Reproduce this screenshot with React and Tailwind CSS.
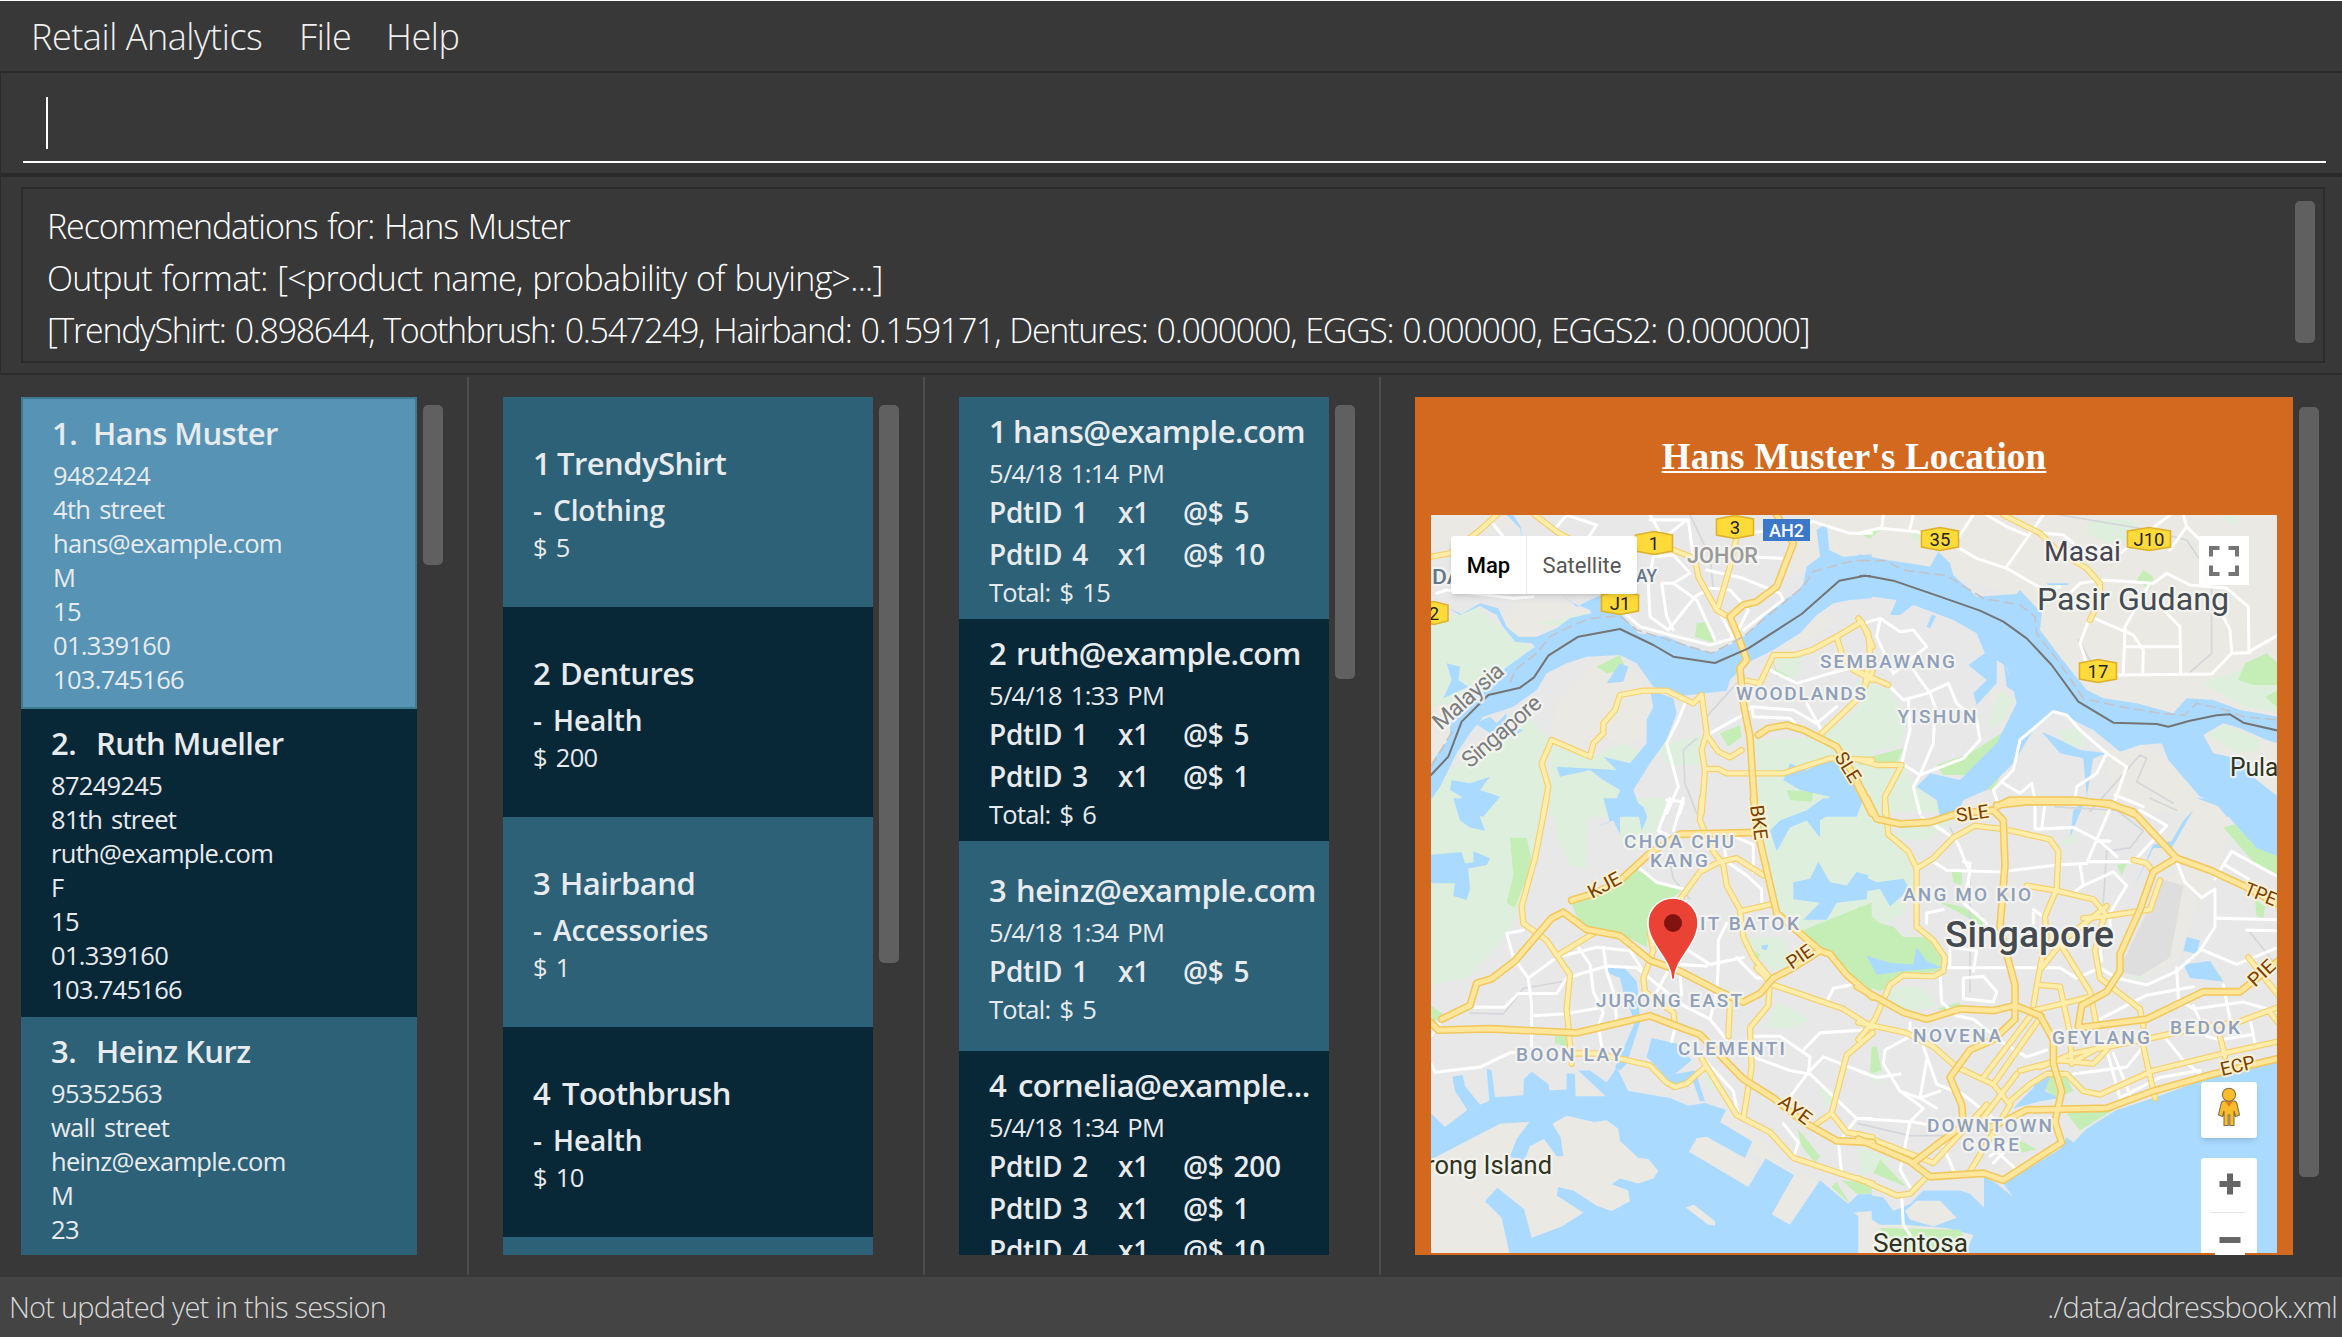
import React from "react";

const people = [
  { n: "1.", nameClass: "-ml-px w-[41px]", name: "Hans Muster", selected: true, lines: ["9482424", "4th street", "hans@example.com", "M", "15", "01.339160", "103.745166"] },
  { n: "2.", nameClass: "w-[45px]", name: "Ruth Mueller", bg: "bg-[#082838]", lines: ["87249245", "81th street", "ruth@example.com", "F", "15", "01.339160", "103.745166"] },
  { n: "3.", nameClass: "w-[45px]", name: "Heinz Kurz", bg: "min-h-[238px] bg-[#2d6178]", lines: ["95352563", "wall street", "heinz@example.com", "M", "23"] },
];

const products = [
  { n: "1", numClass: "w-[24px]", name: "TrendyShirt", category: "Clothing", price: "5" },
  { n: "2", numClass: "w-[27px]", name: "Dentures", category: "Health", price: "200" },
  { n: "3", numClass: "w-[27px]", name: "Hairband", category: "Accessories", price: "1" },
  { n: "4", numClass: "w-[29px]", name: "Toothbrush", category: "Health", price: "10" },
];

const orders = [
  { n: "1", numClass: "w-[24px]", email: "hans@example.com", time: "5/4/18 1:14 PM", items: [["1", "1", "5"], ["4", "1", "10"]], total: "15" },
  { n: "2", numClass: "w-[27px]", email: "ruth@example.com", time: "5/4/18 1:33 PM", items: [["1", "1", "5"], ["3", "1", "1"]], total: "6" },
  { n: "3", numClass: "w-[27px]", email: "heinz@example.com", time: "5/4/18 1:34 PM", items: [["1", "1", "5"]], total: "5" },
  { n: "4", numClass: "w-[29px]", email: "cornelia@example...", time: "5/4/18 1:34 PM", items: [["2", "1", "200"], ["3", "1", "1"], ["4", "1", "10"]] },
];

const TITLE = "text-[31px] font-semibold leading-[42px] tracking-[-0.55px]";
const SMALL = "text-[25.5px] leading-[34px] tracking-[-0.7px] [word-spacing:3px]";
const MID = "text-[28px] font-semibold leading-[42px]";

function ScrollThumb({ className }) {
  return <div className={"w-5 shrink-0 rounded-[5px] bg-[#606060] " + className} />;
}

function Divider() {
  return <div className="h-[898px] w-0.5 shrink-0 bg-[#4d4d4d]" />;
}

function PersonList() {
  return (
    <div className="mt-5 h-[858px] w-[396px] shrink-0 overflow-hidden text-[#e8ebee]">
      {people.map((p) => (
        <div
          key={p.n}
          className={p.selected ? "border-2 border-[#3e7b91] bg-[#5693b5] pb-[11px] pl-[30px] pt-[13px]" : "pb-[11px] pl-[30px] pt-[13px] " + p.bg}
        >
          <div className={"mb-1 flex " + TITLE}>
            <span className={"shrink-0 " + p.nameClass}>{p.n}</span>
            <span>{p.name}</span>
          </div>
          {p.lines.map((l, i) => (
            <div key={i} className={SMALL}>{l}</div>
          ))}
        </div>
      ))}
    </div>
  );
}

function ProductList() {
  return (
    <div className="mt-5 h-[858px] w-[370px] shrink-0 overflow-hidden text-[#e8ebee]">
      {products.map((p) => (
        <div key={p.n} className="flex h-[210px] flex-col bg-[#2d6178] pl-[30px] pt-[45px] even:bg-[#082838]">
          <div className={"flex " + TITLE}>
            <span className={"shrink-0 " + p.numClass}>{p.n}</span>
            <span>{p.name}</span>
          </div>
          <div className={"mt-[5px] flex tracking-[-0.1px] " + MID}>
            <span className="w-5 shrink-0">-</span>
            <span>{p.category}</span>
          </div>
          <div className={"-mt-px " + SMALL}>$ {p.price}</div>
        </div>
      ))}
      <div className="h-[18px] bg-[#2d6178]" />
    </div>
  );
}

function OrderList() {
  return (
    <div className="mt-5 h-[858px] w-[370px] shrink-0 overflow-hidden text-[#e8ebee]">
      {orders.map((o) => (
        <div key={o.n} className="flex min-h-[210px] flex-col justify-center bg-[#2d6178] pb-[8px] pl-[30px] pt-[4px] even:bg-[#082838]">
          <div className={"flex whitespace-nowrap pt-[9px] " + TITLE}>
            <span className={"shrink-0 " + o.numClass}>{o.n}</span>
            <span>{o.email}</span>
          </div>
          <div className={"mb-px mt-1 " + SMALL}>{o.time}</div>
          {o.items.map(([id, q, price]) => (
            <div key={id} className={"flex tracking-[-0.3px] [word-spacing:3px] " + MID}>
              <span className="w-[129px] shrink-0">PdtID {id}</span>
              <span className="w-[65px] shrink-0">x{q}</span>
              <span>@$ {price}</span>
            </div>
          ))}
          {o.total && <div className={"pb-0.5 " + SMALL}>Total: $ {o.total}</div>}
        </div>
      ))}
    </div>
  );
}

/* Map geometry: four tiles, each with its own local coordinate system. */
const TILE = {
  a: "translate(1390 370) scale(.33333)",
  b: "translate(1860 370) scale(.33333)",
  c: "translate(1390 800) scale(.33333 .34247)",
  d: "translate(1860 800) scale(.33333 .34247)",
};

const beige = {
  a: ["123,435 440,435 330,480 200,520 123,540", "420,690 500,700 600,720 540,750 440,800 380,800 330,760 380,700", "500,1000 620,870 690,860 780,960 780,1090 700,1130 640,1100 600,1160 480,1100", "123,980 300,930 345,895 240,980 123,1190", "1220,435 1445,435 1445,570 1250,600 1160,640 1200,560", "1100,890 1170,850 1250,770 1310,730 1330,760 1200,850 1140,930"],
  b: ["-5,435 1255,435 1255,1045 1000,1050 700,990 540,780 480,680 280,620 -5,560", "300,780 375,850 370,920 420,1080 300,1240 380,1260 470,1100 390,900", "740,1140 840,1120 920,1170 1040,1300 1090,1325 700,1325 760,1290"],
  c: ["300,40 400,20 350,110 290,110", "1190,1240 1290,1110 1215,1090 1145,1210", "900,1027 920,988 955,985 1100,1060 1075,1130", "557,805 647,865 557,865", "1010,910 1100,980 1210,1095 1120,1060 990,940"],
  d: ["880,160 1010,-5 1080,20 1110,80 1065,240 1020,290 960,190", "880,250 960,210 1010,300 960,460 860,520 900,380", "640,960 700,950 640,1000", "380,1090 480,1040 560,1040 430,1120"],
};

const lightGreen = {
  a: ["123,770 180,740 260,710 330,770 385,815 430,830 350,890 300,930 180,1000 123,1010", "300,1120 420,1040 480,1110 450,1340 123,1340 123,1290 180,1200", "480,1120 600,1165 700,1120 760,1150 690,1340 480,1340", "1090,1110 1290,1100 1440,990 1450,990 1450,1340 1095,1340 1110,1200", "440,760 560,735 600,725 520,770", "800,1130 950,1090 940,1180 840,1190", "1160,870 1240,850 1220,920 1180,930"],
  b: ["-5,930 90,960 140,1050 120,1130 -5,1150", "690,450 820,450 860,510 740,520 680,490", "150,480 210,480 200,540 150,500", "1030,940 1140,900 1255,950 1255,1030 1150,1010", "420,960 465,990 430,1050 380,1080", "590,1080 660,1070 680,1130 620,1130", "430,870 490,960 470,970", "-5,1160 120,1150 160,1240 260,1325 -5,1325", "1080,440 1130,435 1130,470"],
  c: ["123,-5 460,-5 430,200 380,330 350,400 230,520 123,540", "480,-5 600,-5 590,200 540,190 500,110", "1095,-5 1445,-5 1445,320 1230,400 1170,330 1130,150", "1060,400 1180,400 1210,480 1150,500 1090,440", "1160,590 1260,640 1200,670 1130,660", "700,-5 840,-5 810,80 740,150 690,120", "940,790 1000,840 960,850", "1280,820 1340,860 1310,900"],
  d: ["-5,-5 70,-5 90,110 150,160 160,240 130,330 60,370 -5,300", "100,110 200,120 280,60 200,55 120,80", "120,540 190,550 230,600 150,620 60,590", "600,130 650,90 640,130", "20,800 60,790 60,830", "-5,1010 100,1050 0,1100", "820,515 860,510 840,530"],
};

const park = {
  a: ["920,760 950,755 975,820 915,800", "620,890 690,855 710,900 650,910", "990,1090 1050,1065 1055,1100 1015,1130", "1190,1260 1270,1265 1265,1295 1200,1290", "1145,860 1160,900 1200,920 1160,920"],
  b: ["230,1185 330,1150 440,1080 400,1160 320,1215 250,1215", "-5,1170 130,1135 110,1180 -5,1185", "830,630 850,600 880,620 870,660", "1135,930 1155,880 1220,850 1255,880 1255,945 1180,945", "370,1260 430,1200 400,1260", "-5,485 60,478 30,507", "1215,980 1255,960 1255,1015"],
  c: ["540,290 650,265 740,205 800,235 875,265 840,290 780,330 770,430 690,390 600,380 560,340", "1445,300 1340,340 1240,380 1270,430 1340,460 1380,520 1445,570", "360,110 410,110 430,200 400,250 375,315 350,300 370,220", "123,600 165,630 123,650", "495,680 540,680 530,720 495,710", "1222,958 1290,1040 1275,1060 1235,1010", "1340,1115 1380,1180 1325,1130", "1355,1110 1445,1120 1445,1150 1400,1150", "1085,440 1110,450 1100,480"],
  d: ["-5,310 60,360 100,370 130,400 200,400 250,450 240,500 130,510 60,560 -5,530", "230,295 300,310 370,340 370,370 300,330", "275,210 305,210 305,250 280,240", "1090,80 1130,70 1200,140 1255,165 1255,220 1180,180", "1185,290 1215,310 1210,345 1190,340", "35,720 50,720 65,790 30,800", "560,800 610,790 640,850 590,870 550,840", "620,915 770,900 700,940 660,965", "470,990 530,1020 480,1030", "60,1050 140,1130 40,1090", "150,1250 310,1260 330,1280 300,1325 130,1325", "230,610 300,590 290,620", "770,190 800,185 785,220", "1050,490 1090,520 1060,520"],
};

const water = {
  a: [
    "123,1180 180,1100 180,1060 250,960 330,930 345,895 435,830 425,820 375,815 335,765 320,735 270,708 210,735 175,715 215,732 270,700 325,715 350,770 385,800 440,800 500,775 540,745 605,730 600,720 550,700 500,660 560,710 600,690 640,672 700,740 745,790 830,800 900,830 965,850 1030,820 1075,790 1160,700 1220,670 1240,640 1250,590 1290,560 1280,480 1310,460 1318,540 1360,560 1445,553 1445,685 1380,690 1330,700 1280,735 1230,790 1150,840 1100,865 1070,880 1020,930 1010,962 880,977 790,950 740,880 690,855 590,860 530,880 470,910 440,960 370,1010 280,1040 240,1090 200,1150 150,1250 123,1290",
    "780,960 790,1010 770,1050 770,1120 720,1180 640,1160 680,1200 500,1190 510,1220 600,1200 640,1230 690,1260 660,1340 760,1340 730,1260 780,1180 830,1110 860,1030 850,985",
    "185,1230 240,1240 300,1220 270,1260 330,1280 280,1340 200,1320 215,1280 180,1260",
    "170,880 210,890 205,930 235,950 160,985 185,930",
    "1200,1180 1250,1200 1330,1160 1380,1230 1430,1260 1400,1340 1240,1340 1320,1280 1230,1260 1180,1230",
    "350,435 390,475 400,520 392,470 370,435", "255,1060 300,1040 320,1060 350,1030 345,1070 400,1080 370,1100 300,1090",
    "650,940 690,880 715,890 700,935",
  ],
  b: [
    "-5,553 80,570 150,580 210,590 235,545 270,580 280,615 350,680 470,672 480,660 545,730 540,780 600,860 680,960 730,985 830,1000 940,1030 980,985 1060,990 1140,1020 1255,1040 1255,1340 1100,1340 1060,1290 1020,1280 925,1170 905,1120 840,1125 780,1145 700,1080 590,1025 520,1080 460,1180 380,1260 310,1290 290,1340 240,1340 230,1290 170,1250 210,1210 300,1230 410,1120 470,1000 450,920 440,890 410,870 410,940 350,1005 340,970 380,930 325,885 375,850 350,790 280,750 160,705 120,735 90,735 110,690 40,680 -5,685",
    "545,1085 600,1110 660,1140 740,1150 700,1165 680,1280 670,1165 600,1150",
    "430,870 450,920 490,960 480,975 440,950", "200,770 215,735 228,738 210,775", "560,640 625,640 625,645 565,645",
  ],
  c: [
    "123,915 165,955 232,905 195,850 187,808 218,803 225,835 270,890 298,878 290,785 305,790 315,868 400,862 402,815 425,793 475,830 478,848 530,845 530,798 555,800 557,865 647,865 565,790 600,790 650,825 660,810 680,780 715,850 840,870 895,893 945,885 1008,905 990,940 1087,997 1065,1045 950,983 920,988 897,1027 1075,1130 1127,1047 1212,1095 1145,1210 1200,1240 1290,1110 1375,1180 1400,1155 1445,1150 1445,1340 123,1340",
    "650,487 700,487 740,530 745,570 750,650 710,770 690,790 675,780 735,650 700,560 690,520 655,505",
    "785,695 860,712 905,760 855,800 915,790 945,880 930,880 905,810 850,840 810,790 770,750",
    "123,160 215,152 225,185 250,182 250,150 300,170 290,190 235,200 240,260 230,292 190,280 195,243 123,243",
    "190,-5 310,-5 270,50 285,90 240,80 210,60", "640,-5 690,-5 690,100 670,60 610,80 660,65", "720,-5 760,20 772,50 755,90 745,40",
    "1140,90 1170,60 1250,30 1300,-5 1390,-5 1290,60 1290,110 1250,60 1200,80 1160,150",
    "1210,240 1260,230 1285,180 1320,240 1370,250 1400,210 1435,220 1430,290 1340,300 1310,350 1240,350 1290,300 1210,290", "1115,425 1135,422 1130,438 1115,436",
  ],
  d: [
    "1010,-5 1255,-5 1255,165 1190,140 1130,75 1080,20",
    "1255,765 1150,780 1050,810 880,870 770,905 680,960 640,1000 620,985 600,1020 430,1120 460,1160 410,1120 372,1100 372,1190 330,1150 300,1140 190,1140 150,1180 100,1200 70,1160 -5,1150 -5,1340 1255,1340",
    "20,455 90,475 160,480 170,430 200,470 245,490 130,500 50,510", "-5,215 50,240 130,230 150,260 90,310 60,260 -5,270",
    "980,400 1020,410 1010,450 970,440", "970,480 1050,470 1090,530 990,520", "540,800 580,785 555,850 600,870 540,880 460,900 520,840", "640,30 680,-5 650,60 630,110", "880,130 935,120 970,60 1000,30 935,140 880,140 820,260",
  ],
};

const islands = {
  a: [],
  b: ["1030,1095 1090,1060 1140,1075 1220,1110 1255,1120 1255,1280 1190,1230 1130,1165 1060,1150"],
  c: [
    "123,1050 330,945 418,940 380,990 360,1040 400,1060 420,1010 462,990 500,1040 520,1040 512,985 487,945 530,922 612,940 650,935 685,960 690,995 745,1045 775,1048 805,1083 790,1105 745,1120 690,1105 665,1122 715,1140 720,1172 665,1200 620,1185 550,1140 505,1130 500,1155 580,1205 515,1245 425,1278 402,1195 322,1132 285,1172 335,1220 362,1340 123,1340",
    "887,1190 912,1182 975,1230 975,1243 955,1240", "1390,1205 1445,1200 1445,1240",
  ],
  d: ["135,1200 170,1170 240,1170 290,1220 220,1245 150,1225", "-5,1200 60,1240 130,1240 260,1250 340,1270 310,1340 -5,1340"],
};

const minor = {
  a: ["710,735 750,770 860,800 960,825 1030,805 990,730", "790,560 775,640 780,740 835,780 915,680 960,655 1020,660 1075,720 1040,790", "850,640 920,690 975,810", "790,560 850,555 900,610 850,640 815,640 830,740 850,780", "950,600 1060,625 1170,670 1180,690 1060,780", "780,435 820,505 890,450 780,450", "895,450 910,560", "500,470 530,435 620,465 590,510", "1000,490 1110,485 1270,455 1380,490 1445,490", "140,670 170,660 370,685 430,680", "300,450 340,500", "885,1000 865,1050 830,1120 865,1250 830,1330", "960,1090 1050,1040 1085,1010 1210,1020 1280,1060 1340,1010", "1140,900 1220,940 1320,910 1400,890", "1085,1010 1090,1040 1200,1045 1215,1060", "1070,560 1175,565", "1300,1090 1250,1000", "830,1290 880,1295 870,1330"],
  b: ["-5,490 60,475 170,485 290,530 350,565 440,595 545,655 600,650", "65,475 70,435", "150,475 160,435", "340,435 290,510", "440,590 550,435", "380,435 440,470 500,495", "510,485 610,495 640,520", "620,680 660,640 730,630 880,640 920,610 990,645 1100,655 1165,710 1167,845 1255,795", "690,740 660,820 685,900 780,915 1055,912 1115,850 1170,848", "1115,850 1110,780 1060,680", "690,740 820,795 850,840 848,912", "790,912 795,770 870,640", "880,690 960,770 962,910", "800,830 960,830", "930,540 980,470 1020,510", "980,470 970,435", "780,550 870,480 930,435", "60,750 50,800 100,910 200,830 160,780 120,785 60,745 10,760", "85,945 130,990 200,970 265,940 290,1000 350,1050 360,1110 310,1165 180,1215 125,1180 150,1080 145,990", "160,900 210,970 225,1010 220,1120 180,1215 160,1250 180,1330", "580,1025 620,1035 660,1080 740,1150 800,1190 765,1290", "580,1025 480,1110 460,1200 400,1260 410,1290", "740,1150 710,1210 650,1250 645,1290", "430,1240 480,1270 515,1240 525,1290", "765,1275 850,1310"],
  c: ["123,770 135,795 270,780 360,738 400,735", "245,605 345,605 385,565 500,565 530,520 650,485 740,490 880,600 960,640 1010,700", "400,380 350,390 370,460 415,520 425,600 425,720", "425,630 520,625 640,605", "415,520 500,460 620,430 720,440 760,500", "565,430 600,480 610,560 640,620 625,660 635,720", "640,430 650,500 670,560 680,640", "840,-5 805,90 850,110", "880,-5 850,90", "750,200 800,240 880,260", "1000,120 1010,180 1070,220 1115,260 1115,300", "1040,110 1090,130 1090,210", "1010,360 985,410 985,480 980,560 960,640", "880,430 960,480 1060,460", "1040,460 1100,520 1140,520", "865,480 950,485", "870,500 875,570", "850,470 800,560", "1090,690 1170,690 1260,750 1255,800 1200,790 1090,750", "1240,730 1290,680 1445,670", "1260,790 1300,750 1445,805", "1255,795 1190,880", "1255,795 1400,930 1345,1000 1355,1090", "1180,945 1225,1000 1210,1045", "945,760 1030,850 1045,920", "1310,590 1330,550 1380,540", "845,705 855,665", "1400,930 1445,930", "123,690 150,650"],
  d: ["185,50 250,90 290,120 330,210 310,300 380,360", "220,180 260,205 420,210 590,190 680,185 750,25", "310,180 330,185 325,250", "525,20 525,85 640,80 720,120 770,165", "555,10 545,85", "690,180 820,180 920,75 840,30", "660,190 670,250 760,210 800,250 750,330 750,370", "710,120 750,120", "670,250 640,270", "950,180 975,240 1025,285 1065,260 1065,370 1020,440 950,500 860,540 770,520 720,490 650,520 600,490 260,490", "1065,230 1115,150 1255,225", "1095,190 1165,230", "1065,345 1255,350", "1160,380 1255,382", "1020,435 1130,480 1255,430", "950,490 955,580 1000,610 1150,590 1255,620", "240,510 245,590 290,630 340,640 430,710 500,750 560,730", "310,520 370,515 410,560 400,590 310,580 310,520", "150,650 150,690 75,730 70,770 120,850 180,870 240,850", "120,850 190,900 150,940 120,1080 150,1130", "-5,790 50,810 120,800", "-5,930 160,940 270,960", "190,720 230,830 310,860 400,930", "200,760 180,870 230,900", "740,730 780,870", "760,740 810,860", "640,800 800,780 850,720", "780,870 900,810 1020,790", "920,700 970,760 1020,800", "380,1000 470,1080", "390,1040 450,1000", "400,1060 450,1010", "125,1160 130,1240 150,1270", "1090,540 1110,640", "725,470 720,430", "720,640 860,570 1000,545", "1170,640 1185,710", "1080,700 1180,685", "250,320 200,330 200,360", "520,320 550,340", "270,490 270,430 350,440 340,500", "520,330 520,360", "1000,600 1040,690 1080,700", "245,1000 280,1080"],
};

const major = {
  a: ["435,435 500,485 545,510 620,560", "320,435 270,480 220,520", "123,560 180,550 230,510", "1040,500 1020,590 985,710", "850,540 915,565 925,620 980,720 1005,735", "1060,930 1110,940 1150,855 1215,855 1265,840 1340,800 1415,755 1448,830", "1340,800 1355,850 1390,900 1448,930", "1448,905 1400,990 1290,1095", "460,1330 475,1250 455,1180 485,1110 600,1160 610,1120 640,1090 640,1060 675,1020 690,975 760,962 830,962 910,1000 935,975 950,1090 935,1140 945,1200 935,1330", "950,1095 985,1145 1020,1162 1055,1140", "945,1197 985,1197 1010,1210 1180,1210 1320,1165 1448,1170"],
  b: ["430,435 540,490 590,540 680,595 720,640 720,690 690,750", "-5,745 25,790 30,850 15,950", "-5,905 85,945", "-5,1168 50,1185 125,1185 75,1280 75,1330"],
  c: ["470,-5 435,170 395,310 400,360 470,410 540,510 530,610 545,770", "935,-5 930,60 970,150 1000,190 1010,250 1050,320 1060,400 1090,460 1140,520 1135,600 1080,665 1085,780 1060,930", "870,290 930,210 990,180 1040,170 1120,220", "1050,325 1140,305", "500,455 610,390", "780,390 790,440 760,520 765,560 850,620 855,660", "1020,590 1015,690", "545,740 620,740 780,775 830,825 855,838 890,828 945,780", "935,755 1040,920 1140,970 1210,1045 1350,1090 1448,1120", "1150,540 1360,610 1448,665", "1448,680 1370,745 1325,915 1280,945", "1325,915 1370,970 1448,985", "1100,490 1150,540"],
  d: ["75,-5 85,100 145,150 170,200 170,370 220,410 255,460 250,500 220,515 130,512 90,540 45,640 -5,700", "170,200 220,170 280,110 345,75 430,85 570,115 595,150 590,260 555,340 560,400 540,490 520,600", "-5,650 140,680 220,720 290,780 400,830 450,890", "820,175 860,185 880,210", "900,235 870,320 730,340 670,345", "500,250 590,265 700,290 735,330 705,440 720,520 840,610 850,660", "740,310 610,410 545,490", "600,420 690,560 710,660", "540,540 600,545 630,680 635,770", "520,615 690,575", "520,620 370,810", "545,630 400,830", "540,780 640,740 850,700 1040,660 1130,650 1255,605", "480,790 600,760 700,770 740,730", "640,765 730,715", "450,880 510,830 560,800 620,800 670,850 720,860 880,790 1090,740 1255,705", "850,720 885,870", "1080,690 1095,750", "1165,460 1255,570", "1230,620 1255,650", "360,940 470,800", "330,1085 450,890", "-5,975 220,1060 380,890", "-5,1105 110,1155 150,1150 200,1100"],
};

const express = {
  a: ["1160,435 1210,520 1160,650 1100,695 1060,705 1020,740 1045,800 1070,870 1050,895 1060,1000 1080,1100 1095,1330", "1105,1095 1135,1075 1190,1065 1240,1080 1340,1130 1400,1230 1440,1310 1450,1330"],
  b: ["410,1310 450,1290 650,1290 750,1305 820,1325", "-10,1240 35,1330"],
  c: ["155,640 240,600 260,535 305,522 375,470 485,345 520,328 590,378 690,397 780,468 870,500 990,560 1060,590 1110,565 1150,520 1200,495 1290,440 1320,450 1370,510 1448,575", "123,650 145,672 300,668 560,680 780,630 860,660 930,685 990,745 1060,815 1150,870 1240,940 1340,995 1448,1000", "545,293 620,270 690,235 780,155 870,100 1000,97 1090,95", "1090,-5 1110,120 1160,330 1290,440"],
  d: ["20,-5 50,55 120,70 210,65 290,40 400,30 430,60 435,190 420,370 440,450 465,540 465,640 400,700 330,730 270,810 305,890 310,950 240,1000 160,1060", "410,15 500,5 650,5 750,10 830,45 950,170 1050,205 1150,250 1255,305", "-8,545 130,620 200,640 300,610 400,615 465,600 540,630 580,700 580,770 605,850 585,940 605,1000 430,1110 370,1090 210,1100 150,1055 -5,990", "940,175 880,210 840,320 780,450 780,500 740,560 665,600 655,660", "660,665 860,640 1030,560 1140,560 1255,470", "380,960 450,930 500,905 740,900 880,850 1060,800 1255,755"],
};

const rail = {
  a: ["950,1040 1040,940", "920,1105 880,1140 885,1240 920,1330", "900,435 960,560 970,660"],
  b: ["600,435 840,475 980,510 1020,570", "1055,650 1055,850 985,912", "690,1325 840,1155 860,1165 830,1235 940,1300", "655,810 690,870"],
  c: ["240,622 340,625 400,550 520,530", "840,180 850,230 900,290"],
  d: ["270,80 330,200 330,560", "585,20 770,30 850,90 810,140 740,150 730,300", "1165,380 1255,490", "-5,945 150,980 270,980", "950,30 870,-5"],
};

const border = {
  a: ["123,1215 175,1160 215,1055 295,975 390,953 432,922 475,857 565,800 690,777 790,825 850,860 975,879 1075,835 1235,732 1348,632 1425,617 1440,619"],
  b: ["28,619 100,632 240,680 360,722 430,755 500,805 575,885 655,995 760,1058 890,1062 925,1070 990,1052 1070,1036 1110,1033 1150,1058 1255,1082", "28,619 10,617 0,619"],
};

const dashed = {
  a: ["123,1190 190,1080", "360,940 375,900 440,850 480,800 540,770 600,745 690,738 740,780 900,830 965,850 1060,800 1160,715 1240,650 1270,605 1390,572 1440,572"],
  b: ["0,572 75,572 130,600 260,617 370,685 480,705 525,740 530,790 600,880 670,985 780,1010 900,1030 975,1035 1010,1000 1100,1020 1150,1040 1255,1050"],
};

function Areas({ data, fill }) {
  return Object.keys(TILE).map((k) => (
    <g key={k} transform={TILE[k]} fill={fill}>
      {(data[k] || []).map((p, i) => <polygon key={i} points={p} />)}
    </g>
  ));
}

function Lines({ data, stroke, width, dash, cap = "round" }) {
  return Object.keys(TILE).map((k) => (
    <g key={k} transform={TILE[k]} fill="none" stroke={stroke} strokeWidth={width} strokeDasharray={dash} strokeLinecap={cap} strokeLinejoin="round">
      {(data[k] || []).map((p, i) => <polyline key={i} points={p} />)}
    </g>
  ));
}

const districts = [
  ["SEMBAWANG", 1820, 667.5, 135], ["WOODLANDS", 1736, 699.5, 130], ["YISHUN", 1897.5, 723, 79], ["CHOA CHU", 1624, 847.5, 110], ["KANG", 1650, 866.5, 58],
  ["IT BATOK", 1700, 930, 99], ["JURONG EAST", 1596, 1006.5, 146], ["BOON LAY", 1516, 1061, 106], ["CLEMENTI", 1678, 1055, 107], ["ANG MO KIO", 1903, 901, 128],
  ["NOVENA", 1913, 1042, 88], ["GEYLANG", 2052, 1044, 98], ["BEDOK", 2170, 1034, 70], ["DOWNTOWN", 1927, 1131.5, 125], ["CORE", 1962, 1151, 57],
];

const places = [
  ["JOHOR", 1687, 563, 71, 22, "#9a9a9a", 500], ["DA", 1432, 584, 30, 21, "#64778c", 500], ["AY", 1636, 582, 21, 18, "#64778c", 500],
  ["Singapore", 1945, 947, 169, 36, "#444a50", 500], ["Masai", 2044, 561, 77, 27, "#45434f", 400], ["Pasir Gudang", 2037, 610, 192, 31, "#454b52", 400],
  ["Pulau", 2230, 776, 62, 26, "#2f3322", 400], ["Jurong Island", 1398, 1174, 154, 26, "#2f3322", 400], ["Sentosa", 1873, 1252, 95, 26, "#2f3322", 400],
];

const roadNames = [
  ["SLE", 1834, 757, 58, 32], ["SLE", 1957, 822, -8, 33], ["BKE", 1750, 806, 82, 35], ["KJE", 1592, 899, -28, 35], ["PIE", 1792, 970, -35, 28],
  ["AYE", 1777, 1104, 37, 36], ["TPE", 2243, 894, 22, 33], ["PIE", 2255, 988, -43, 30], ["ECP", 2222, 1076, -13, 35],
];

const shields = [["3", 1735, 527, 37], ["1", 1654, 543, 37], ["J1", 1620, 603, 37], ["2", 1434, 613, 28], ["35", 1940, 539, 37], ["J10", 2149, 539, 43], ["17", 2098, 671, 37]];

function MapCanvas() {
  return (
    <svg viewBox="1431 515 846 738" width="846" height="738" className="block" fontFamily="Roboto, sans-serif">
      <rect x="1431" y="515" width="846" height="738" fill="#e8e8e8" />
      <Areas data={beige} fill="#ebe9e4" />
      <Areas data={lightGreen} fill="#def0dd" />
      <Areas data={park} fill="#c5edb6" />
      <Areas data={water} fill="#aadaff" />
      <Areas data={islands} fill="#ebe9e4" />
      <g transform={TILE.b} fill="#def0dd"><polygon points="1040,1090 1100,1065 1200,1110 1200,1140 1130,1150" /></g>
      <g transform={TILE.d}>
        <polygon points="900,230 970,250 930,460 840,515 775,500 860,330" fill="#dedede" />
        <polygon points="60,1250 300,1255 320,1290 250,1335 100,1335" fill="#c5edb6" />
      </g>
      <Lines data={rail} stroke="#d3d6da" width={5} />
      <Lines data={minor} stroke="#ffffff" width={9} />
      <Lines data={major} stroke="#f6d06f" width={19} />
      <Lines data={major} stroke="#ffeeab" width={12} />
      <Lines data={express} stroke="#f2c75c" width={23} />
      <Lines data={express} stroke="#ffe69b" width={14} />
      <Lines data={border} stroke="#747474" width={6} />
      <Lines data={dashed} stroke="#c3c3c6" width={5} dash="32 14" cap="butt" />
      {shields.map(([t, x, y, w], i) => (
        <g key={i} transform={`translate(${x} ${y})`}>
          <path d={`M${-w / 2} -8L0 -11.5L${w / 2} -8V8L0 11.5L${-w / 2} 8Z`} fill="#fedb38" stroke="#dfb02c" strokeWidth="1.6" />
          <text y="6.5" textAnchor="middle" fontSize="18.5" fill="#222">{t}</text>
        </g>
      ))}
      <rect x="1763" y="519" width="47" height="22" fill="#3b78c9" />
      <text x="1786.5" y="536.5" textAnchor="middle" fontSize="18" fontWeight="500" fill="#fff">AH2</text>
      <g stroke="#f5f5f2" strokeOpacity=".85" strokeWidth="4.5" strokeLinejoin="round" paintOrder="stroke">
        {districts.map(([t, x, y, w]) => (
          <text key={t} x={x} y={y} textLength={w} fontSize="19" fontWeight="500" fill="#8f9fb9">{t}</text>
        ))}
        {places.map(([t, x, y, w, s, c, fw]) => (
          <text key={t} x={x} y={y} textLength={w} lengthAdjust="spacingAndGlyphs" fontSize={s} fontWeight={fw} fill={c}>{t}</text>
        ))}
        <text transform="translate(1441 731) rotate(-42)" textLength="87" fontSize="23" fill="#7c7c7c">Malaysia</text>
        <text transform="translate(1470 769) rotate(-41)" textLength="97" fontSize="23" fill="#7c7c7c">Singapore</text>
      </g>
      <g stroke="#fff3d0" strokeOpacity=".85" strokeWidth="4" strokeLinejoin="round" paintOrder="stroke">
        {roadNames.map(([t, x, y, r, w], i) => (
          <text key={i} transform={`translate(${x} ${y}) rotate(${r})`} textLength={w} lengthAdjust="spacingAndGlyphs" fontSize="19" fill="#7a3e00">{t}</text>
        ))}
      </g>
      <path d="M1673 980C1672 980 1671.500 979 1671.300 977C1670 958 1648 944 1648 923A25 25 0 0 1 1698 923C1698 944 1676 958 1674.700 977C1674.500 979 1674 980 1673 980Z" fill="#ea4335" stroke="#fff" strokeWidth="1.5" />
      <circle cx="1673" cy="923" r="9" fill="#811411" />
    </svg>
  );
}

function MapPanel() {
  return (
    <div className="mt-5 flex h-[858px] w-[878px] shrink-0 flex-col items-center bg-[#d2691e]">
      <h1 className="flex h-[118px] items-center justify-center pt-px font-['Liberation_Serif',serif] text-[37px] font-bold tracking-[0.2px] text-white underline decoration-2 underline-offset-2">
        Hans Muster's Location
      </h1>
      <div className="relative h-[740px] w-[846px] font-[Roboto,sans-serif]">
        <MapCanvas />
        <div className="absolute left-5 top-[21px] flex h-[58px] w-[186px] items-center rounded-[3px] bg-white text-[22px] shadow-md">
          <div className="flex h-full w-[76px] items-center justify-center border-r border-[#e9e9e9] font-medium text-black">Map</div>
          <div className="flex flex-1 items-center justify-center text-[#565656]">Satellite</div>
        </div>
        <div className="absolute left-[768px] top-[21px] flex h-[49px] w-[50px] items-center justify-center bg-white">
          <svg width="32" height="32" viewBox="0 0 32 32" fill="none" stroke="#757575" strokeWidth="4">
            <path d="M3 11.500V3H11.500M20.500 3H29V11.500M29 20.500V29H20.500M11.500 29H3V20.500" />
          </svg>
        </div>
        <div className="absolute left-[770px] top-[567px] flex h-[56px] w-[56px] items-center justify-center rounded-[3px] bg-white shadow-md">
          <svg width="24" height="40" viewBox="0 0 24 40" className="-mt-1.5">
            <path d="M7 14H17Q19.500 14 20 17L22.500 28L18.500 29.500L17 24V38.500H12.800V28H11.200V38.500H7V24L5.500 29.500L1.500 28L4 17Q4.500 14 7 14Z" fill="#fbbc2b" stroke="#80704a" strokeWidth="1.1" />
            <path d="M8 14H16L12 20Z" fill="#e37f1e" />
            <circle cx="12" cy="7.800" r="6.600" fill="#fbbc2b" stroke="#80704a" strokeWidth="1.1" />
          </svg>
        </div>
        <div className="absolute left-[770px] top-[643px] flex h-[95px] w-[56px] flex-col items-center rounded-t-[3px] bg-white">
          <svg width="56" height="97" viewBox="0 0 56 97" className="shrink-0">
            <path d="M29 15.500V36.500M18.500 26H39.500M18.500 82H39.500" stroke="#666" strokeWidth="6" />
            <path d="M9 54.500H44" stroke="#e6e6e6" strokeWidth="1.200" />
            <rect x="14" y="94" width="30" height="3" fill="#fff" />
          </svg>
        </div>
      </div>
    </div>
  );
}

export default function App() {
  return (
    <div className="flex h-[1337px] w-[2342px] flex-col overflow-hidden border-t border-white bg-[#383838] font-['Open_Sans',sans-serif]">
      <nav className="flex h-[70px] shrink-0 items-center gap-[37px] pl-[31px] pt-0.5 text-[36px] font-light leading-[68px] tracking-[-0.45px] text-[#f0f0f0]">
        <span className="w-[231px] whitespace-nowrap">Retail Analytics</span>
        <span className="w-[50px]">File</span>
        <span>Help</span>
      </nav>
      <div className="h-[106px] shrink-0 border-b-4 border-l border-t-2 border-[#2b2b2b] pl-[22px] pr-4 pt-6">
        <div className="h-[66px] border-b-2 border-white pl-[23px]">
          <div className="h-[52px] w-0.5 bg-white" />
        </div>
      </div>
      <div className="h-[198px] shrink-0 border-b-2 border-l border-[#2b2b2b] pb-2.5 pl-5 pr-[17px] pt-2.5">
        <div className="flex h-full items-start justify-between border-2 border-[#2b2b2b] pl-6 pr-2">
          <div className="pt-[11px] text-[34px] font-light leading-[52px] text-white">
            <div className="tracking-[-1.1px] [word-spacing:2px]">Recommendations for: Hans Muster</div>
            <div className="tracking-[-0.7px] [word-spacing:1.5px]">Output format: [&lt;product name, probability of buying&gt;...]</div>
            <div className="tracking-[-1.3px] [word-spacing:1.5px]">[TrendyShirt: 0.898644, Toothbrush: 0.547249, Hairband: 0.159171, Dentures: 0.000000, EGGS: 0.000000, EGGS2: 0.000000]</div>
          </div>
          <ScrollThumb className="mt-[12px] h-[142px]" />
        </div>
      </div>
      <main className="flex h-[902px] shrink-0 items-start pl-[21px] pt-0.5">
        <PersonList />
        <ScrollThumb className="ml-1.5 mr-6 mt-7 h-[160px]" />
        <Divider />
        <div className="w-[34px] shrink-0" />
        <ProductList />
        <ScrollThumb className="ml-1.5 mr-6 mt-7 h-[558px]" />
        <Divider />
        <div className="w-[34px] shrink-0" />
        <OrderList />
        <ScrollThumb className="ml-1.5 mr-6 mt-7 h-[274px]" />
        <Divider />
        <div className="w-[34px] shrink-0" />
        <MapPanel />
        <ScrollThumb className="ml-1.5 mt-[30px] h-[770px]" />
      </main>
      <footer className="flex flex-1 items-center justify-between bg-[#444444] pl-[9px] pr-[5px] text-[29px] font-light leading-[60px] tracking-[-0.8px] text-[#d8d8d8]">
        <span>Not updated yet in this session</span>
        <span>./data/addressbook.xml</span>
      </footer>
    </div>
  );
}
